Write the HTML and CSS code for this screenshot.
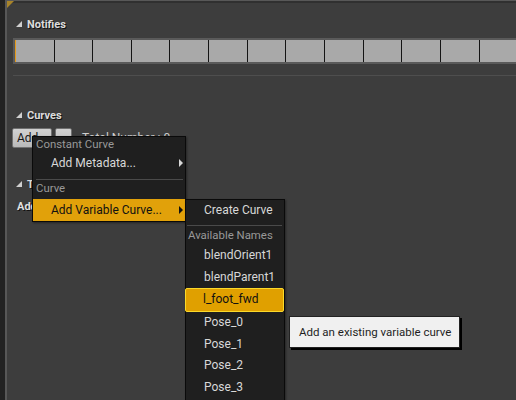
FILE: index.html
```html
<!DOCTYPE html>
<html>
<head>
<meta charset="utf-8">
<link rel="stylesheet" href="styles.css">
</head>
<body>
<div class="frame">
  <div class="panel">
    <div class="corner"></div>
    <div class="hdr hdr-notifies"><svg class="tri" width="6" height="6" viewBox="0 0 6 6"><polygon points="6,0 6,6 0,6" fill="#d0d0d0"/></svg><span>Notifies</span></div>
    <div class="track">
      <div class="cell first"></div><div class="cell"></div><div class="cell"></div><div class="cell"></div><div class="cell"></div><div class="cell"></div><div class="cell"></div><div class="cell"></div><div class="cell"></div><div class="cell"></div><div class="cell"></div><div class="cell"></div><div class="cell"></div><div class="cell"></div>
    </div>
    <div class="sep"></div>
    <div class="hdr hdr-curves"><svg class="tri" width="6" height="6" viewBox="0 0 6 6"><polygon points="6,0 6,6 0,6" fill="#d0d0d0"/></svg><span>Curves</span></div>
    <div class="btnrow">
      <div class="btn">Add</div>
      <div class="btn small"></div>
      <span class="total">Total Number : 0</span>
    </div>
    <div class="hdr hdr-tracks"><svg class="tri" width="6" height="6" viewBox="0 0 6 6"><polygon points="6,0 6,6 0,6" fill="#d0d0d0"/></svg><span>Tracks</span></div>
    <div class="addrow">Add Track</div>
  </div>

  <div class="menu m1">
    <div class="mh mh1">Constant Curve</div>
    <div class="mi mi-meta"><span>Add Metadata...</span><svg class="arr" width="4" height="8" viewBox="0 0 4 8"><polygon points="0,0 4,4 0,8" fill="#d8d8d8"/></svg></div>
    <div class="msep"></div>
    <div class="mh mh2">Curve</div>
    <div class="mi mi-var"><span>Add Variable Curve...</span><svg class="arr" width="4" height="8" viewBox="0 0 4 8"><polygon points="0,0 4,4 0,8" fill="#111"/></svg></div>
  </div>

  <div class="menu m2">
    <div class="mi2 create">Create Curve</div>
    <div class="msep sep2"></div>
    <div class="mh mh3">Available Names</div>
    <div class="mi2">blendOrient1</div>
    <div class="mi2">blendParent1</div>
    <div class="mi2 sel">l_foot_fwd</div>
    <div class="mi2">Pose_0</div>
    <div class="mi2">Pose_1</div>
    <div class="mi2">Pose_2</div>
    <div class="mi2">Pose_3</div>
  </div>

  <div class="tip">Add an existing variable curve</div>
</div>
</body>
</html>
```

FILE: styles.css
```css
html, body {
  margin: 0;
  padding: 0;
}
body {
  width: 516px;
  height: 400px;
  overflow: hidden;
  background: #3d3d3d;
  font-family: Roboto, "Noto Sans", "Liberation Sans", sans-serif;
}
.frame {
  position: relative;
  height: 400px;
  border-left: 5px solid #222222;
  overflow: hidden;
  background: #3d3d3d;
}
.panel {
  position: relative;
  height: 399px;
  border-left: 2px solid #575757;
  border-top: 1px solid #585858;
  box-shadow: inset 0 2px 0 #303030;
  overflow: hidden;
}
.corner {
  position: absolute;
  left: -2px;
  top: -1px;
  width: 0;
  height: 0;
  border-top: 10px solid #a8842a;
  border-right: 10px solid transparent;
}
.hdr {
  display: flex;
  align-items: center;
  height: 16px;
  padding-left: 9px;
  font-size: 11px;
  font-weight: bold;
  color: #dcdcdc;
  text-shadow: 1px 1px 0 #111;
}
.hdr .tri {
  margin-right: 5px;
  flex: none;
}
.hdr-notifies { margin-top: 15px; }
.hdr-curves { margin-top: 31px; }
.hdr-tracks { margin-top: 28px; }

.track {
  display: flex;
  margin-top: 6px;
  margin-left: 6px;
  width: 560px;
  height: 22px;
  border: 2px solid #5a5a5a;
  border-right: none;
  background: #a9a9a9;
}
.cell {
  flex: none;
  width: 37.67px;
  height: 22px;
  border-right: 1px solid #141414;
  background: #a9a9a9;
}
.cell.first {
  width: 37.5px;
  border-left: 1px solid #e59a1a;
}
.sep {
  margin-top: 11px;
  margin-left: 6px;
  height: 1px;
  background: #4e4e4e;
}
.btnrow {
  display: flex;
  align-items: center;
  margin-top: 5px;
  padding-left: 5px;
  height: 20px;
}
.btn {
  box-sizing: border-box;
  width: 40px;
  height: 20px;
  padding-left: 4px;
  line-height: 18px;
  font-size: 12px;
  color: #151515;
  background: linear-gradient(#d2d2d2, #b9b9b9);
  border: 1px solid #707070;
  border-radius: 2px;
}
.btn.small {
  width: 17px;
  margin-left: 3px;
}
.total {
  margin-left: 10px;
  font-size: 12px;
  color: #cfcfcf;
}
.addrow {
  margin-top: 8px;
  padding-left: 10px;
  height: 14px;
  line-height: 14px;
  font-size: 11px;
  font-weight: bold;
  color: #e0e0e0;
  text-shadow: 1px 1px 0 #111;
}

/* menus */
.menu {
  position: absolute;
  box-sizing: border-box;
  background: #1f1f1f;
  border: 1px solid #0a0a0a;
  box-shadow: 1px 1px 2px rgba(0,0,0,0.4);
}
.m1 {
  left: 27px;
  top: 136px;
  width: 154px;
  height: 86px;
}
.m2 {
  left: 180px;
  top: 199px;
  width: 100px;
  height: 220px;
}
.mh {
  font-size: 11.4px;
  color: #999999;
  padding-left: 3px;
}
.mh1 { height: 14px; line-height: 14px; }
.mh2 { height: 17px; line-height: 17px; }
.mh3 { height: 19px; line-height: 19px; padding-left: 2px; }
.mi {
  display: flex;
  align-items: center;
  justify-content: space-between;
  padding-left: 18px;
  padding-right: 2px;
  font-size: 12px;
  color: #d8d8d8;
}
.mi-meta { height: 23px; }
.mi-var {
  height: 22px;
  margin-top: 2px;
  background: #e1a10a;
  color: #111;
}
.msep {
  margin: 5px 2px 0 3px;
  height: 1px;
  background: #4a4a4a;
}
.sep2 {
  margin: 4px 2px 0 1px;
}
.mi2 {
  height: 21.5px;
  line-height: 21.5px;
  padding-left: 18px;
  font-size: 12px;
  color: #d8d8d8;
}
.mi2.create {
  height: 21px;
  line-height: 21px;
}
.mi2.sel {
  box-sizing: border-box;
  height: 24px;
  line-height: 21px;
  margin: 0 0 0 -1px;
  padding-left: 17px;
  background: #e0a000;
  border: 1.5px solid #fbd92a;
  border-radius: 2px;
  color: #111;
}

.tip {
  position: absolute;
  left: 284px;
  top: 316px;
  box-sizing: border-box;
  width: 171px;
  height: 32px;
  padding-left: 9px;
  line-height: 30px;
  font-size: 11.5px;
  color: #1e1e1e;
  background: #f0f0f0;
  border: 1px solid #222;
  box-shadow: 2px 2px 0 #000;
}
```
